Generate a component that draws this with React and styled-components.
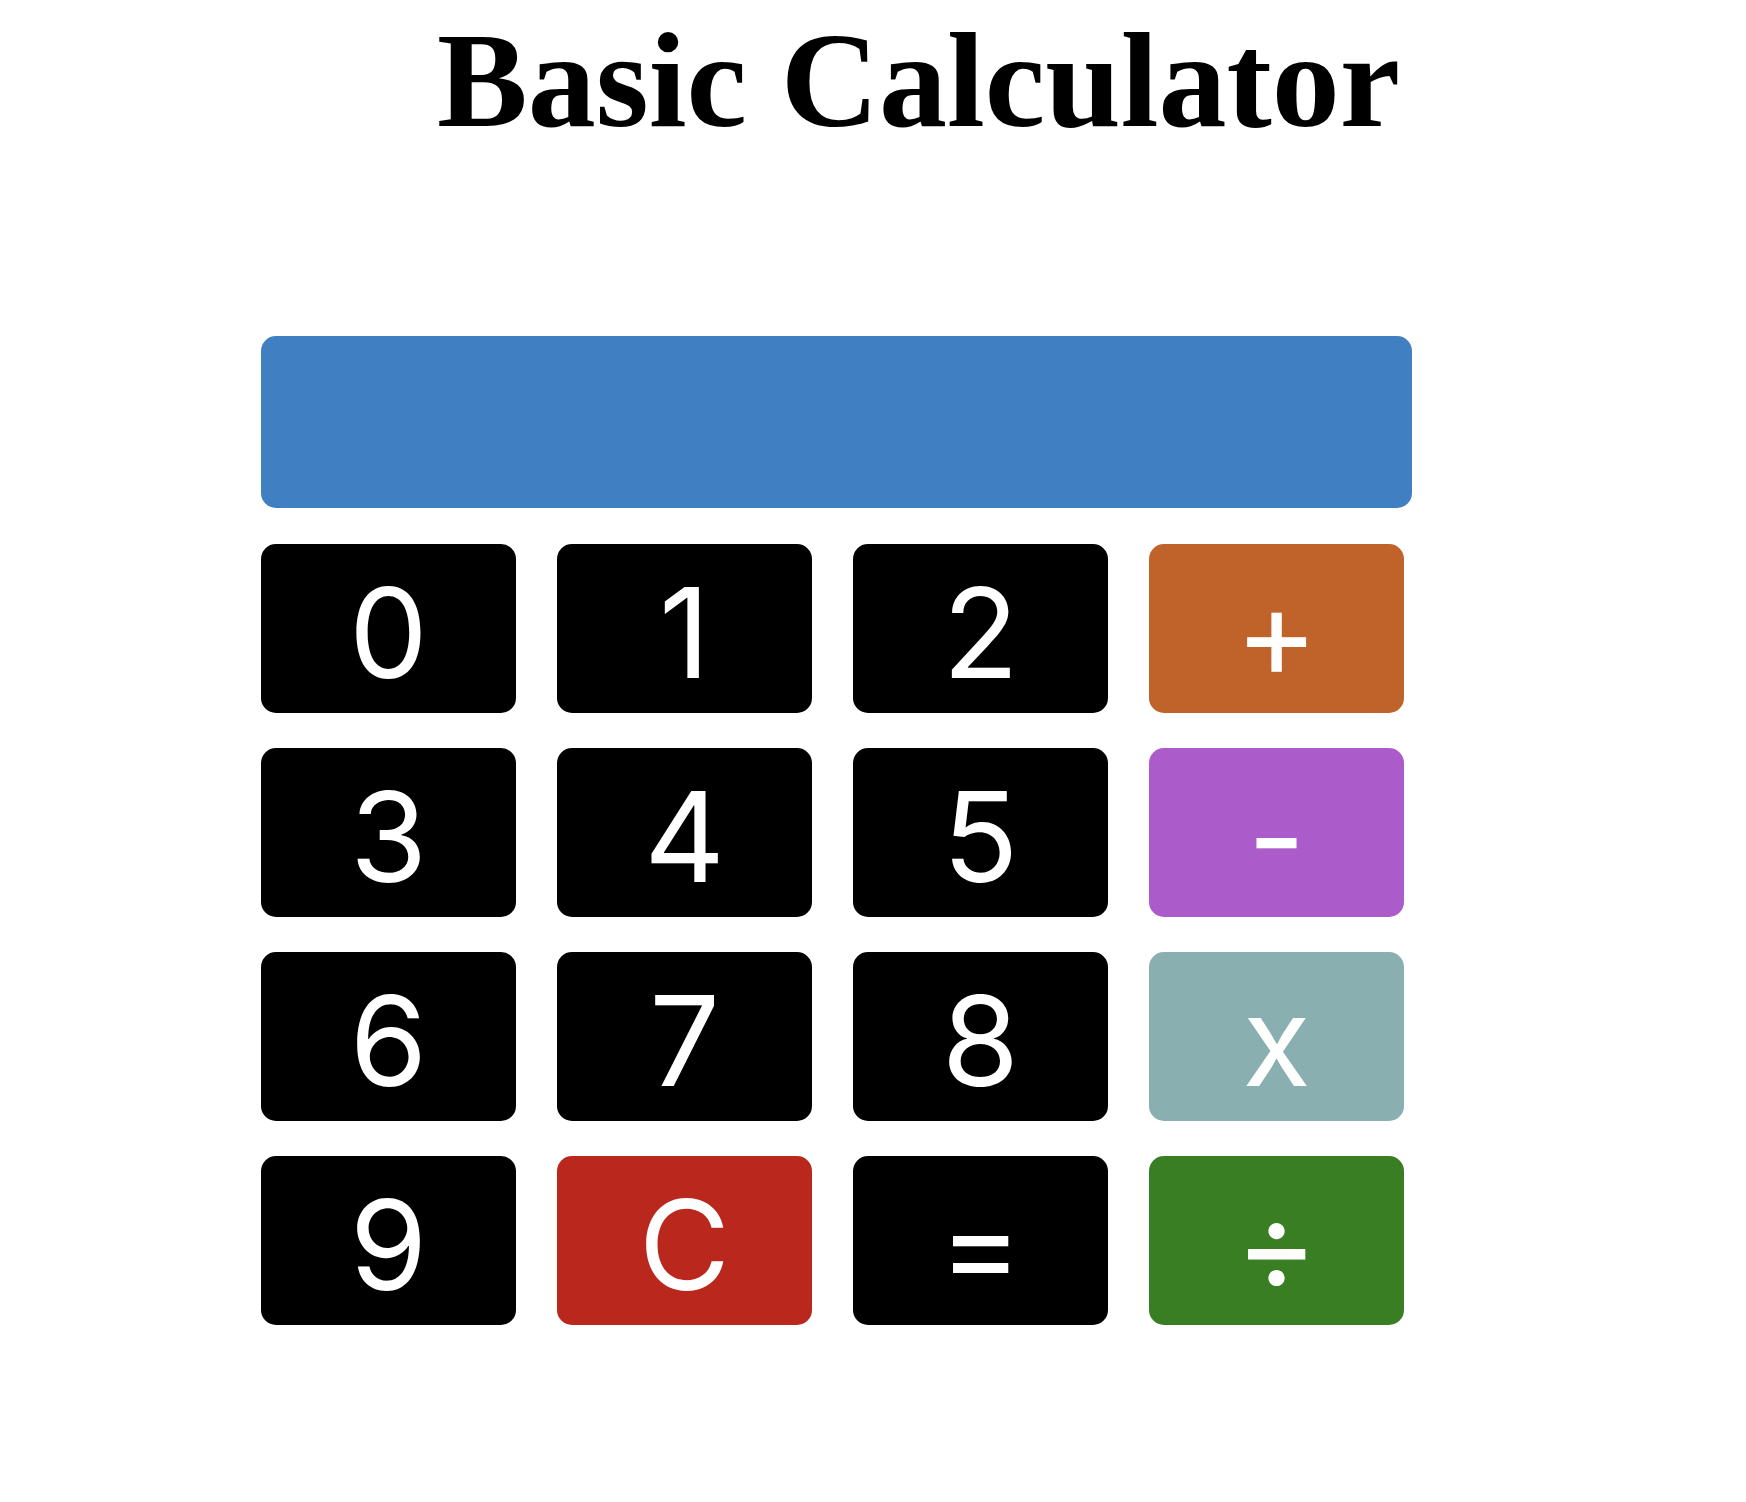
import React from "react";
import styled, { createGlobalStyle } from "styled-components";

const GlobalStyle = createGlobalStyle`
  html, body { margin: 0; padding: 0; background: #ffffff; }
  body { font-family: Inter, "Liberation Sans", Arial, sans-serif; }
`;

const Page = styled.div`
  display: flex;
  flex-direction: column;
  min-height: 1502px;
`;

const Title = styled.h1`
  margin: 0;
  padding: 5px 0 0 437px;
  font-family: "Liberation Serif", "Times New Roman", serif;
  font-weight: 700;
  font-size: 136px;
  line-height: 150px;
  color: #000;
  white-space: nowrap;
`;

const Calculator = styled.div`
  margin: 181px 0 0 261px;
  display: flex;
  flex-direction: column;
  gap: 36px;
`;

const Display = styled.div`
  width: 1151px;
  height: 172px;
  border-radius: 15px;
  background: #407fc2;
`;

const Keypad = styled.div`
  display: grid;
  grid-template-columns: repeat(4, 255px);
  grid-auto-rows: 169px;
  column-gap: 41px;
  row-gap: 35px;
`;

const Key = styled.button`
  box-sizing: border-box;
  margin: 0;
  padding: 8px 0 0 0;
  border: none;
  border-radius: 15px;
  background: ${(p) => p.$bg || "#000000"};
  color: #ffffff;
  font-family: Inter, "Liberation Sans", Arial, sans-serif;
  font-size: 125px;
  font-weight: 400;
  line-height: 1;
  display: flex;
  align-items: center;
  justify-content: center;
  cursor: pointer;
`;

const keys = [
  { label: "0" },
  { label: "1" },
  { label: "2" },
  { label: "+", bg: "#bf632a" },
  { label: "3" },
  { label: "4" },
  { label: "5" },
  { label: "-", bg: "#ac5bcb" },
  { label: "6" },
  { label: "7" },
  { label: "8" },
  { label: "x", bg: "#89afb0" },
  { label: "9" },
  { label: "C", bg: "#ba271c" },
  { label: "=" },
  { label: "÷", bg: "#3a7e23" },
];

export default function App() {
  return (
    <Page>
      <GlobalStyle />
      <Title>Basic Calculator</Title>
      <Calculator>
        <Display />
        <Keypad>
          {keys.map((k) => (
            <Key key={k.label} $bg={k.bg}>
              {k.label}
            </Key>
          ))}
        </Keypad>
      </Calculator>
    </Page>
  );
}
